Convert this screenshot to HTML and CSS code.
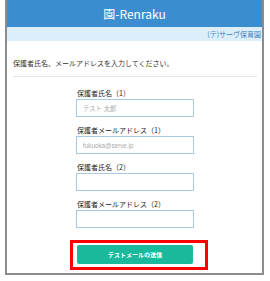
FILE: index.html
```html
<html>
<head>
    <link rel="stylesheet" href="styles.css">
</head>
<body>
    <div class="frame">
        <div class="header">園-Renraku</div>
        <div class="band"><span>(テ)サーヴ保育園</span></div>
        <div class="content">
            <p class="lead">保護者氏名、メールアドレスを入力してください。</p>
            <div class="form">
                <div class="field">
                    <label>保護者氏名（1）</label>
                    <input type="text" placeholder="テスト 太郎">
                </div>
                <div class="field">
                    <label>保護者メールアドレス（1）</label>
                    <input type="text" placeholder="fukuoka@serve.jp">
                </div>
                <div class="field">
                    <label>保護者氏名（2）</label>
                    <input type="text">
                </div>
                <div class="field">
                    <label>保護者メールアドレス（2）</label>
                    <input type="text">
                </div>
                <div class="mark">
                    <button>テストメールの送信</button>
                </div>
            </div>
        </div>
    </div>
</body>
</html>
```

FILE: styles.css
```css
body{
    margin:0;
    background:#fff;
    font-family:"Noto Sans CJK JP","Noto Sans",sans-serif;
    color:#333;
}
.frame{
    margin-left:5px;
    width:255px;
    height:273px;
    border:2px solid #8c8c8c;
    border-top:none;
    overflow:hidden;
    display:flex;
    flex-direction:column;
}
.header{
    height:27px;
    background:#3a8ed0;
    color:#fff;
    font-size:12px;
    line-height:27px;
    text-align:center;
}
.band{
    height:14px;
    background:#dceefa;
    display:flex;
    justify-content:flex-end;
}
.band span{
    font-size:7px;
    line-height:14px;
    color:#3a7fc0;
    white-space:nowrap;
    margin-right:1px;
}
.content{
    padding:17px 5px 0 6px;
}
.lead{
    margin:0;
    font-size:7px;
    line-height:10px;
    padding-bottom:8px;
    border-bottom:1px solid #e6e6e6;
}
.form{
    width:118px;
    margin:11px auto 0;
    display:flex;
    flex-direction:column;
    gap:8px;
}
.field{
    display:flex;
    flex-direction:column;
    gap:1px;
}
.field label{
    font-size:7px;
    line-height:10px;
    padding-left:1px;
    color:#222;
}
.field input{
    box-sizing:border-box;
    height:18px;
    width:118px;
    margin:0;
    border:1px solid #a9c9e2;
    padding:0 6px;
    font-size:6.3px;
    font-family:"Liberation Sans","Noto Sans CJK JP",sans-serif;
}
.field input::placeholder{
    color:#aaa;
}
.mark{
    margin:4px 0 0 -6px;
    width:124px;
    border:3px solid #f00;
    padding:2px 4px 3px 4px;
}
.mark button{
    display:block;
    width:116px;
    height:19px;
    border:none;
    border-radius:2px;
    background:#1bb99b;
    color:#fff;
    font-family:"Noto Sans CJK JP",sans-serif;
    font-weight:bold;
    font-size:6px;
    padding:0;
}
```
